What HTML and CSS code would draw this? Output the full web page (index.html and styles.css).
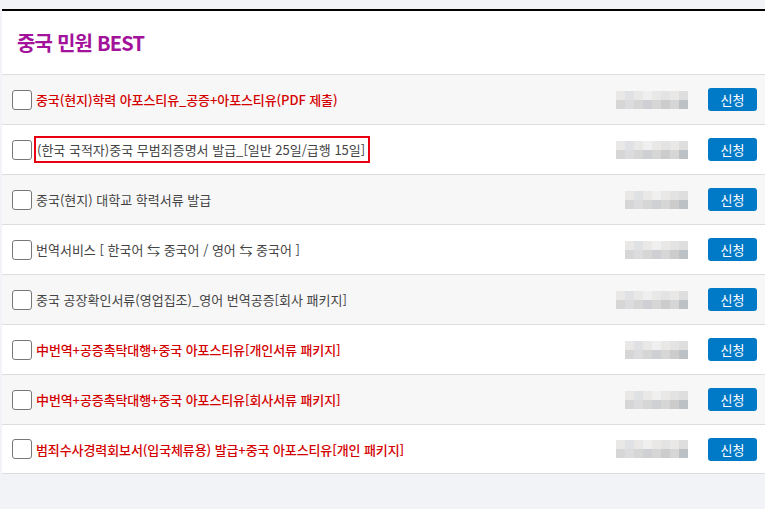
FILE: index.html
```html
<!DOCTYPE html>
<html lang="ko">
<head>
    <meta charset="UTF-8">
    <meta name="viewport" content="width=device-width, initial-scale=1.0">
    <title>중국 민원 BEST</title>
    <link rel="stylesheet" href="styles.css">
</head>
<body>
    <div id="wrap">
        <div class="box">
            <h2 class="tit">중국 민원 BEST</h2>
            <ul class="list">
                <li class="row">
                    <span class="chk"></span>
                    <span class="name red">중국(현지)학력 아포스티유_공증+아포스티유(PDF 제출)</span>
                    <span class="price"><i></i><i></i><i></i><i></i><i></i><i></i><i></i><i></i><i></i><i></i><i></i><i></i><i></i><i></i><i></i><i></i></span>
                    <a href="#" class="btn">신청</a>
                </li>
                <li class="row">
                    <span class="chk"></span>
                    <span class="name mark">(한국 국적자)중국 무범죄증명서 발급_[일반 25일/급행 15일]</span>
                    <span class="price"><i></i><i></i><i></i><i></i><i></i><i></i><i></i><i></i><i></i><i></i><i></i><i></i><i></i><i></i><i></i><i></i></span>
                    <a href="#" class="btn">신청</a>
                </li>
                <li class="row">
                    <span class="chk"></span>
                    <span class="name">중국(현지) 대학교 학력서류 발급</span>
                    <span class="price"><i></i><i></i><i></i><i></i><i></i><i></i><i></i><i></i><i></i><i></i><i></i><i></i><i></i><i></i></span>
                    <a href="#" class="btn">신청</a>
                </li>
                <li class="row">
                    <span class="chk"></span>
                    <span class="name">번역서비스 [ 한국어 ⇆ 중국어 / 영어 ⇆ 중국어 ]</span>
                    <span class="price"><i></i><i></i><i></i><i></i><i></i><i></i><i></i><i></i><i></i><i></i><i></i><i></i><i></i><i></i></span>
                    <a href="#" class="btn">신청</a>
                </li>
                <li class="row">
                    <span class="chk"></span>
                    <span class="name">중국 공장확인서류(영업집조)_영어 번역공증[회사 패키지]</span>
                    <span class="price"><i></i><i></i><i></i><i></i><i></i><i></i><i></i><i></i><i></i><i></i><i></i><i></i><i></i><i></i><i></i><i></i></span>
                    <a href="#" class="btn">신청</a>
                </li>
                <li class="row">
                    <span class="chk"></span>
                    <span class="name red">中번역+공증촉탁대행+중국 아포스티유[개인서류 패키지]</span>
                    <span class="price"><i></i><i></i><i></i><i></i><i></i><i></i><i></i><i></i><i></i><i></i><i></i><i></i><i></i><i></i></span>
                    <a href="#" class="btn">신청</a>
                </li>
                <li class="row">
                    <span class="chk"></span>
                    <span class="name red">中번역+공증촉탁대행+중국 아포스티유[회사서류 패키지]</span>
                    <span class="price"><i></i><i></i><i></i><i></i><i></i><i></i><i></i><i></i><i></i><i></i><i></i><i></i><i></i><i></i></span>
                    <a href="#" class="btn">신청</a>
                </li>
                <li class="row">
                    <span class="chk"></span>
                    <span class="name red">범죄수사경력회보서(입국체류용) 발급+중국 아포스티유[개인 패키지]</span>
                    <span class="price"><i></i><i></i><i></i><i></i><i></i><i></i><i></i><i></i><i></i><i></i><i></i><i></i><i></i><i></i><i></i><i></i></span>
                    <a href="#" class="btn">신청</a>
                </li>
            </ul>
        </div>
    </div>
</body>
</html>
```

FILE: styles.css
```css
* { margin:0; padding:0; box-sizing: border-box;}
body {
    background-color: #f2f3f7;
    font-family: "Noto Sans CJK KR", "Noto Sans", sans-serif;
    color: #444;
}
ul { list-style: none; }
a { text-decoration: none; }
#wrap {
    padding: 9px 0 0 2px;
}
.box {
    background-color: #fff;
    border-top: 2px solid #000;
}
.tit {
    height: 63px;
    line-height: 63px;
    padding-left: 15px;
    font-size: 20px;
    font-weight: 700;
    color: #a3129b;
    letter-spacing: -0.8px;
}
.row {
    height: 50px;
    display: flex;
    align-items: center;
    border-top: 1px solid #ddd;
    padding: 0 8px 0 10px;
}
.row:nth-child(odd) {
    background-color: #f7f7f7;
}
.row:last-child {
    border-bottom: 1px solid #ddd;
}
.chk {
    width: 20px;
    height: 20px;
    border: 1px solid #777;
    border-radius: 3px;
    background-color: #fff;
    margin-right: 4px;
    flex-shrink: 0;
}
.name {
    flex: 1;
    font-size: 13px;
    color: #444;
}
.name.red {
    color: #d40000;
    font-weight: 500;
    letter-spacing: -0.1px;
}
.name.mark {
    flex: none;
    margin-right: auto;
    margin-left: -2px;
    padding: 1px 3px 1px 1px;
    border: 2px solid #e60012;
    line-height: 21px;
}
.price {
    display: grid;
    grid-template-rows: 9px 9px;
    grid-auto-flow: column;
    grid-auto-columns: 9px;
    margin-right: 20px;
}
.price i:nth-child(odd) { background-color: #e9e8e7; }
.price i:nth-child(even) { background-color: #d6d6d7; }
.price i:nth-child(3) { background-color: #e0e1e4; }
.price i:nth-child(4) { background-color: #dcdcde; }
.price i:nth-child(7) { background-color: #efefef; }
.price i:nth-child(8) { background-color: #cfd0d4; }
.price i:nth-child(11) { background-color: #e3e3e3; }
.price i:nth-child(12) { background-color: #cdcccc; }
.price i:nth-last-child(2) { background-color: #dedede; }
.price i:last-child { background-color: #bcc1c6; }
.btn {
    width: 49px;
    height: 23px;
    line-height: 23px;
    text-align: center;
    background-color: #0079c6;
    border-radius: 3px;
    color: #fff;
    font-size: 13px;
}
```
